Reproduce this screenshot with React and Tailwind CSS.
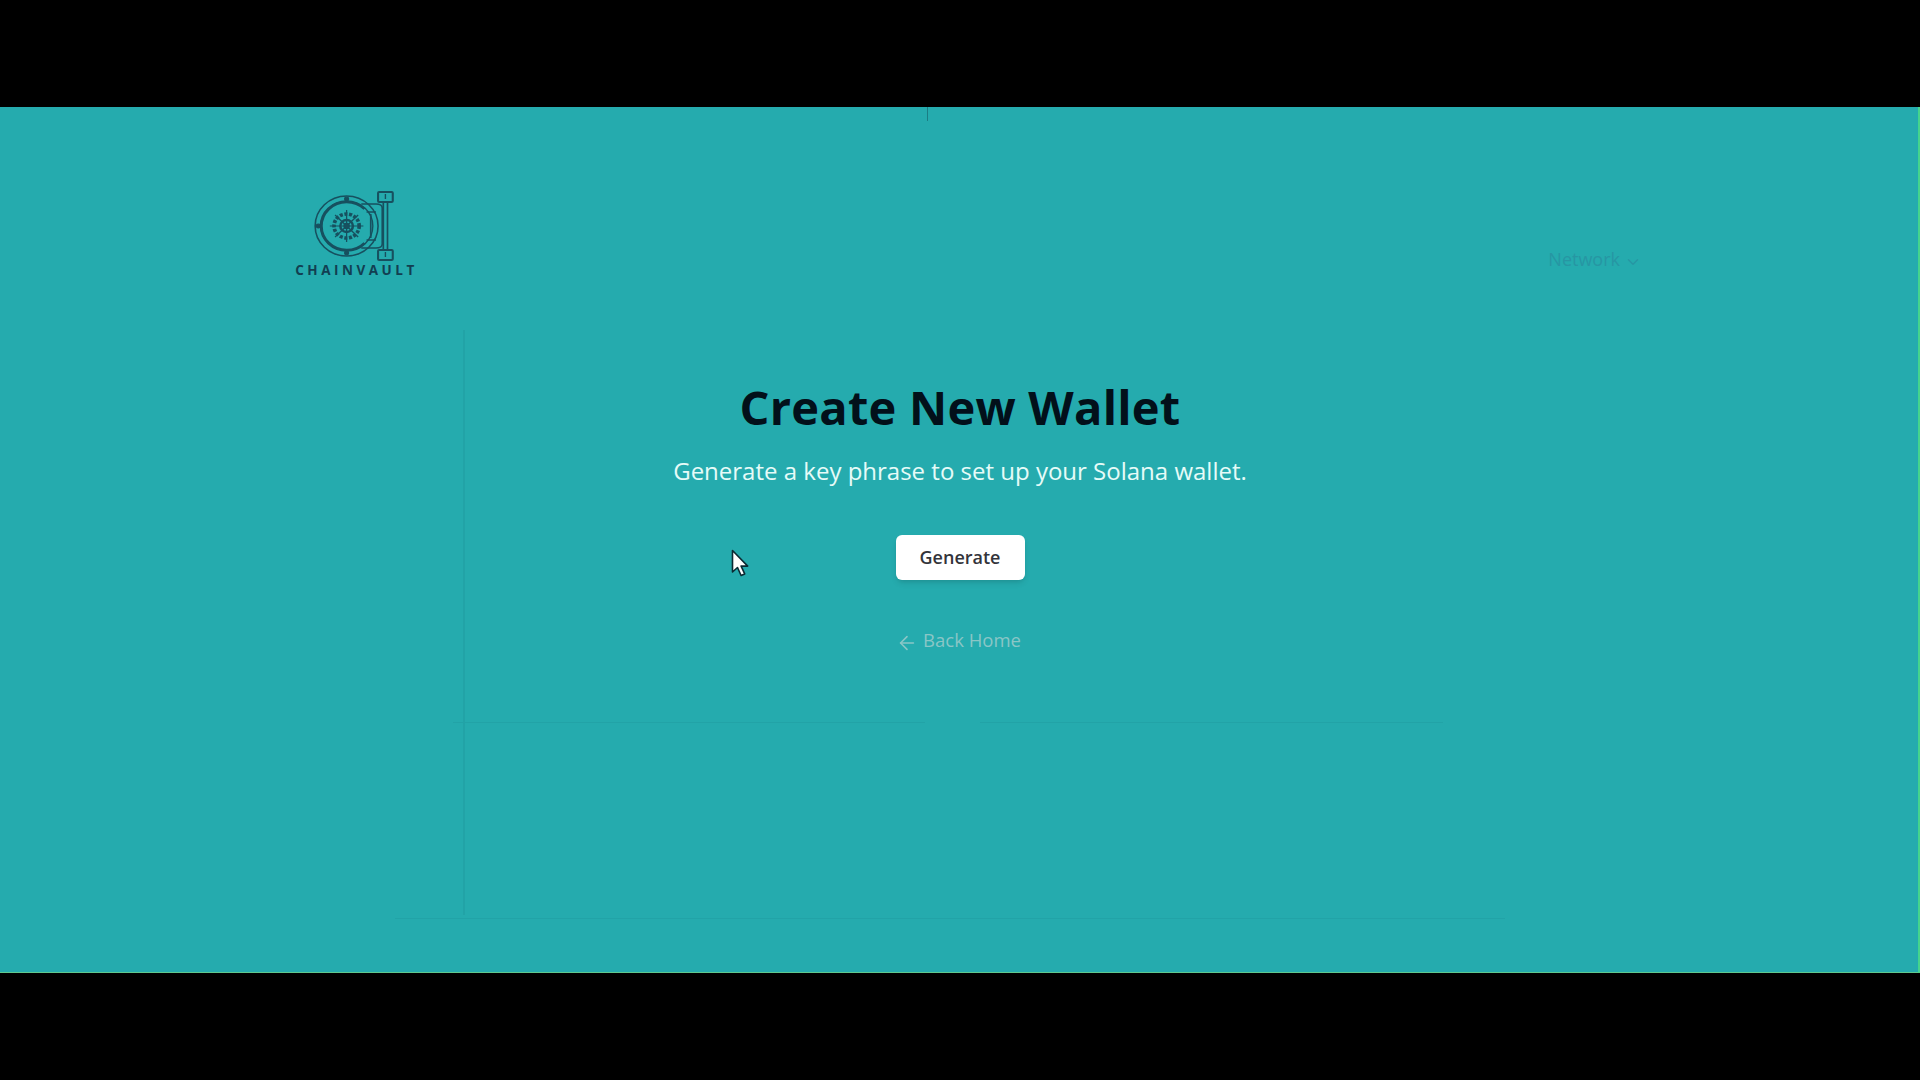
import { ChevronDown, ArrowLeft } from 'lucide-react';

const font = { fontFamily: '"Open Sans", "Noto Sans", sans-serif' };

// Faint leftovers of the previous frame in the video capture
const ghostLines = [
  'left-[453px] top-[722px] h-px w-[472px]',
  'left-[980px] top-[722px] h-px w-[463px]',
  'left-[395px] top-[918px] h-px w-[1110px]',
  'left-[463px] top-[330px] h-[585px] w-[2px]',
];

// Vault door logo
const VaultLogo = () => (
  <svg className="blur-[0.4px]" width="86" height="72" viewBox="0 0 82 72" preserveAspectRatio="none" fill="none" stroke="#17505f" strokeWidth="1.3">
    <circle cx="33" cy="36" r="30" strokeWidth="1.5" />
    <circle cx="33" cy="36" r="25" />
    <path d="M50 19 A24 24 0 1 0 50 53" strokeWidth="2.4" />
    <circle cx="33" cy="36" r="12" strokeWidth="3.5" strokeDasharray="3 1.5" />
    <circle cx="33" cy="36" r="6" strokeWidth="2.4" />
    <circle cx="33" cy="36" r="2.5" fill="#17505f" />
    <path d="M33 20v32M17 36h32M22 25l22 22M44 25L22 47" strokeWidth="1.2" />
    <circle cx="33" cy="9" r="1.8" fill="#17505f" />
    <circle cx="33" cy="63" r="1.8" fill="#17505f" />
    <circle cx="6" cy="36" r="1.8" fill="#17505f" />
    <path d="M47 14h14c4 0 6 2 6 4v36c0 2-2 4-6 4H47M52 22h9M52 50h9M56 24v24" strokeWidth="1.6" />
    <path d="M68 12v48M72 12v48" strokeWidth="1.6" />
    <rect x="63" y="2" width="14" height="10" rx="1" strokeWidth="2" />
    <rect x="63" y="60" width="14" height="10" rx="1" strokeWidth="2" />
    <path d="M70 4v5M70 62v5" />
  </svg>
);

// Mouse pointer from the capture
const Cursor = () => (
  <svg className="absolute left-[731px] top-[549px]" width="18" height="28" viewBox="0 0 18 28">
    <path d="M1.5 1.5V23l5-4.5 3.6 8 3.6-1.6-3.6-7.8h6.6z" fill="#fff" stroke="#0a2a33" strokeWidth="1.6" strokeLinejoin="round" />
  </svg>
);

const App = () => {
  return (
    <div className="relative h-[1080px] w-full overflow-hidden bg-black flex flex-col" style={font}>
      <div className="h-[107px] shrink-0" />

      <main className="h-[866px] shrink-0 bg-[#25abae] border-b border-[#5fc98f]">
        <header className="flex items-start justify-between pl-[295px] pr-[278px] pt-[83px]">
          <div className="flex flex-col items-center w-[120px]">
            <VaultLogo />
            <span className="mt-[1px] pl-[3px] text-[13.5px] leading-[15px] font-bold tracking-[0.26em] text-[#123f52] whitespace-nowrap">
              CHAINVAULT
            </span>
          </div>
          <button className="mt-[57px] flex items-center gap-1 text-[18px] leading-[24px] text-[#2796a3]">
            Network
            <ChevronDown size={18} strokeWidth={2} className="mt-1.5" />
          </button>
        </header>

        <section className="flex flex-col items-center pt-[99px]">
          <h1 className="text-[47px] leading-[60px] font-bold text-[#02101a] tracking-[0.005em]">
            Create New Wallet
          </h1>
          <p className="mt-[17px] text-[24px] leading-[34px] text-[#e6fbf8]">
            Generate a key phrase to set up your Solana wallet.
          </p>
          <button className="mt-[47px] h-[45px] w-[129px] rounded-md bg-white text-[18px] font-semibold text-[#33343a] shadow-md">
            Generate
          </button>
          <a className="mt-[46px] flex items-center gap-[5px] text-[18.5px] leading-[26px] text-[#8ac6c6]">
            <ArrowLeft size={22} strokeWidth={1.75} className="mt-[6px] -ml-[3px]" />
            Back Home
          </a>
        </section>
      </main>

      {ghostLines.map((cls) => (
        <div key={cls} className={`absolute bg-[#22a3a7] ${cls}`} />
      ))}
      <div className="absolute left-[927px] top-[107px] h-[14px] w-px bg-[#1b7d84]" />
      <div className="absolute right-0 top-[107px] h-[866px] w-[2px] bg-[#45d48c]" />

      <Cursor />
    </div>
  );
};

export default App;
